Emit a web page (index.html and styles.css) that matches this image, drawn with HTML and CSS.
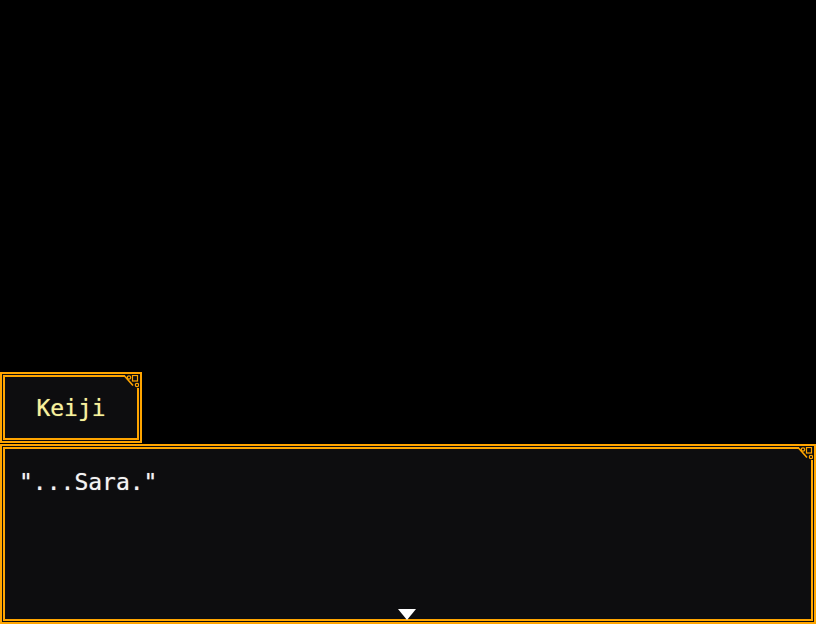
FILE: index.html
```html
<!DOCTYPE html>
<html>
<head>
<meta charset="utf-8">
<link rel="stylesheet" href="styles.css">
</head>
<body>
<div class="stage">
  <div class="frame namebox">
    <div class="inner name-inner">
      <span class="name">Keiji</span>
    </div>
    <svg class="orn" width="16" height="16" viewBox="0 0 16 16">
      <rect x="0" y="0" width="16" height="16" fill="#0d0d0f"/>
      <g fill="#ffa500">
        <rect x="0" y="0" width="2" height="2"/>
        <rect x="14" y="13" width="2" height="3"/>
      </g>
      <g fill="none" stroke="#ffa500">
        <path d="M1.5 1 L10 10.5" stroke-width="1.6"/>
        <circle cx="6" cy="2.5" r="1.7" stroke-width="1.2"/>
        <rect x="9.5" y="0.5" width="5" height="5.5" stroke-width="1.2"/>
        <circle cx="14" cy="10" r="1.7" stroke-width="1.2"/>
      </g>
    </svg>
  </div>
  <div class="frame msgbox">
    <div class="inner msg-inner">
      <p class="msg">"...Sara."</p>
    </div>
    <svg class="orn" width="16" height="16" viewBox="0 0 16 16">
      <rect x="0" y="0" width="16" height="16" fill="#0d0d0f"/>
      <g fill="#ffa500">
        <rect x="0" y="0" width="2" height="2"/>
        <rect x="14" y="13" width="2" height="3"/>
      </g>
      <g fill="none" stroke="#ffa500">
        <path d="M1.5 1 L10 10.5" stroke-width="1.6"/>
        <circle cx="6" cy="2.5" r="1.7" stroke-width="1.2"/>
        <rect x="9.5" y="0.5" width="5" height="5.5" stroke-width="1.2"/>
        <circle cx="14" cy="10" r="1.7" stroke-width="1.2"/>
      </g>
    </svg>
    <svg class="next" width="18" height="11" viewBox="0 0 18 11">
      <path d="M0 0 H18 L9 11 Z" fill="#ffffff"/>
    </svg>
  </div>
</div>
</body>
</html>
```
FILE: styles.css
```css
html, body {
  margin: 0;
  padding: 0;
  background: #000;
}
.stage {
  width: 816px;
  height: 624px;
  display: flex;
  flex-direction: column;
  justify-content: flex-end;
  align-items: flex-start;
}
.frame {
  position: relative;
  box-sizing: border-box;
  background: #0d0d0f;
  border: 2px solid #ffa500;
  padding: 1px;
}
.inner {
  box-sizing: border-box;
  height: 100%;
  border: 2px solid #ffa500;
}
.namebox {
  width: 142px;
  height: 71px;
  margin-bottom: 1px;
}
.name-inner {
  display: flex;
  align-items: center;
  justify-content: center;
}
.name {
  font-family: "DejaVu Sans Mono", monospace;
  font-size: 23px;
  color: #f8f29c;
  padding-top: 1px;
  text-shadow: 0 0 1px rgba(248, 242, 156, 0.6);
}
.msgbox {
  width: 816px;
  height: 180px;
}
.msg-inner {
  padding: 16px 14px;
}
.msg {
  margin: 0;
  font-family: "DejaVu Sans Mono", monospace;
  font-size: 23px;
  line-height: 34px;
  color: #f4f4f4;
  text-shadow: 0 0 1px rgba(244, 244, 244, 0.6);
}
.orn {
  position: absolute;
  top: 1px;
  right: 1px;
}
.next {
  position: absolute;
  left: 396px;
  bottom: 2px;
}
```
